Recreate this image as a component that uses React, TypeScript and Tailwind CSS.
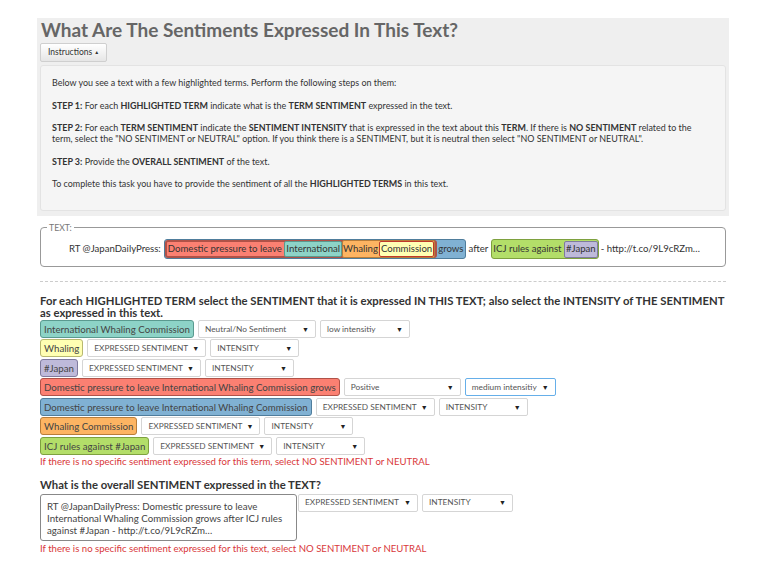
import React from "react";

const C = {
  teal: "bg-[#8dd3c7] border-[#5a9a8f]",
  yellow: "bg-[#ffffb3] border-[#b8b870]",
  purple: "bg-[#bebada] border-[#7f7b9e]",
  red: "bg-[#fb8072] border-[#b05248]",
  blue: "bg-[#80b1d3] border-[#4f7d9c]",
  orange: "bg-[#fdb462] border-[#b87d3a]",
  green: "bg-[#b3de69] border-[#7ea13f]",
};

function Sel({ w, text, focus }: { w: string; text: string; focus?: boolean }) {
  return (
    <div
      className={`${w} h-[18px] bg-white border ${focus ? "border-[#66afe9]" : "border-[#d5d5d5]"} rounded-[2px] flex items-center justify-between pl-[6px] pr-[6px] text-[8.3px] text-[#555]`}
    >
      <span className="whitespace-nowrap">{text}</span>
      <span className="text-[7px] text-[#222]">▼</span>
    </div>
  );
}

function Term({ color, children }: { color: string; children: React.ReactNode }) {
  return (
    <div className={`${color} h-[18px] border rounded-[3px] px-[3px] flex items-center text-[9.7px] text-[#444] whitespace-nowrap`}>
      {children}
    </div>
  );
}

function Row({ color, term, s1, s2, w1, w2, focus }: any) {
  return (
    <div className="flex items-center gap-[4px] h-[19.5px]">
      <Term color={color}>{term}</Term>
      <Sel w={w1} text={s1} />
      <Sel w={w2} text={s2} focus={focus} />
    </div>
  );
}

export default function App() {
  return (
    <div className="min-h-[576px] bg-white" style={{ fontFamily: "Lato, 'Open Sans', sans-serif" }}>
      <div className="ml-[37px] w-[692px] pt-[18px]">
        <div className="bg-[#efefef] px-[3px] pt-[1px] pb-[5px]">
          <h1 className="text-[19px] font-bold text-[#666] leading-[22px] ml-[1px]">
            What Are The Sentiments Expressed In This Text?
          </h1>
          <button className="mt-[2px] h-[19px] px-[7px] text-[8.5px] text-[#333] border border-[#cfcfcf] rounded-[2px] bg-gradient-to-b from-white to-[#e6e6e6] flex items-center gap-[2px]">
            Instructions <span className="text-[5px]">▲</span>
          </button>
          <div className="mt-[3px] h-[146px] bg-[#f5f5f5] border border-[#e3e3e3] rounded-[3px] px-[11px] pt-[11px] text-[8.95px] leading-[11px] text-[#333]">
            <p className="mb-[11.5px]">Below you see a text with a few highlighted terms. Perform the following steps on them:</p>
            <p className="mb-[11.5px]">
              <b>STEP 1:</b> For each <b>HIGHLIGHTED TERM</b> indicate what is the <b>TERM SENTIMENT</b> expressed in the text.
            </p>
            <p className="mb-[11.5px]">
              <b>STEP 2:</b> For each <b>TERM SENTIMENT</b> indicate the <b>SENTIMENT INTENSITY</b> that is expressed in the text about this <b>TERM</b>. If there is <b>NO SENTIMENT</b> related to the term, select the "NO SENTIMENT or NEUTRAL" option. If you think there is a SENTIMENT, but it is neutral then select "NO SENTIMENT or NEUTRAL".
            </p>
            <p className="mb-[11.5px]">
              <b>STEP 3:</b> Provide the <b>OVERALL SENTIMENT</b> of the text.
            </p>
            <p>
              To complete this task you have to provide the sentiment of all the <b>HIGHLIGHTED TERMS</b> in this text.
            </p>
          </div>
        </div>

        <fieldset className="mt-[5px] mx-[3px] border border-[#999] rounded-[4px] pl-[28px] pr-[6px] pb-[7px] pt-[5px]">
          <legend className="text-[8.7px] text-[#777] px-[2px] ml-[-22px]">TEXT:</legend>
          <div className="flex items-center text-[9.6px] text-[#333] whitespace-nowrap h-[20px]">
            <span className="mr-[3px]">RT @JapanDailyPress:</span>
            <span className={`${C.blue} border rounded-[3px] flex items-center h-[20px]`}>
              <span className={`${C.red} border-2 border-[#333]/70 rounded-[3px] flex items-center h-[18px] pl-[1px]`}>
                Domestic pressure to leave&nbsp;
                <span className={`${C.teal} border rounded-[2px] px-[1px]`}>International</span>
                <span className={`${C.orange} border rounded-[2px] flex items-center`}>
                  Whaling
                  <span className={`${C.yellow} border border-[#c0392b] rounded-[2px] px-[1px] ml-[1px]`}>Commission</span>
                </span>
              </span>
              <span className="px-[1px]">grows</span>
            </span>
            <span className="mx-[3px]">after</span>
            <span className={`${C.green} border rounded-[3px] flex items-center h-[20px] pl-[1px]`}>
              ICJ rules against&nbsp;
              <span className={`${C.purple} border rounded-[2px] px-[1px] h-[17px] flex items-center`}>#Japan</span>
            </span>
            <span className="ml-[2px]">- http://t.co/9L9cRZm…</span>
          </div>
        </fieldset>

        <div className="mt-[14px] mx-[3px] border-t border-dashed border-[#ccc]" />

        <div className="mx-[3px] mt-[13px]">
          <h2 className="text-[11.3px] font-bold text-[#333] leading-[12px]">
            For each HIGHLIGHTED TERM select the SENTIMENT that it is expressed IN THIS TEXT; also select the INTENSITY of THE SENTIMENT as expressed in this text.
          </h2>
          <div className="flex flex-col">
            <Row color={C.teal} term="International Whaling Commission" s1="Neutral/No Sentiment" s2="low intensitiy" w1="w-[118px]" w2="w-[90px]" />
            <Row color={C.yellow} term="Whaling" s1="EXPRESSED SENTIMENT" s2="INTENSITY" w1="w-[119px]" w2="w-[89px]" />
            <Row color={C.purple} term="#Japan" s1="EXPRESSED SENTIMENT" s2="INTENSITY" w1="w-[119px]" w2="w-[89px]" />
            <Row color={C.red} term="Domestic pressure to leave International Whaling Commission grows" s1="Positive" s2="medium intensitiy" w1="w-[117px]" w2="w-[91px]" focus />
            <Row color={C.blue} term="Domestic pressure to leave International Whaling Commission" s1="EXPRESSED SENTIMENT" s2="INTENSITY" w1="w-[119px]" w2="w-[89px]" />
            <Row color={C.orange} term="Whaling Commission" s1="EXPRESSED SENTIMENT" s2="INTENSITY" w1="w-[119px]" w2="w-[89px]" />
            <Row color={C.green} term="ICJ rules against #Japan" s1="EXPRESSED SENTIMENT" s2="INTENSITY" w1="w-[119px]" w2="w-[89px]" />
          </div>
          <p className="text-[9.6px] text-[#d9383a] leading-[12px]">
            If there is no specific sentiment expressed for this term, select NO SENTIMENT or NEUTRAL
          </p>

          <h2 className="mt-[10px] text-[11.3px] font-bold text-[#333] leading-[13px]">
            What is the overall SENTIMENT expressed in the TEXT?
          </h2>
          <div className="mt-[3px] flex items-start">
            <div className="w-[257px] h-[47px] border border-[#888] rounded-[3px] pl-[6px] pr-[3px] pt-[5px] text-[9.7px] leading-[12.3px] text-[#444]">
              RT @JapanDailyPress: Domestic pressure to leave International Whaling Commission grows after ICJ rules against #Japan - http://t.co/9L9cRZm…
            </div>
            <div className="ml-[1px] flex gap-[4px]">
              <Sel w="w-[120px]" text="EXPRESSED SENTIMENT" />
              <Sel w="w-[91px]" text="INTENSITY" />
            </div>
          </div>
          <p className="text-[9.6px] text-[#d9383a] leading-[12px] mt-[2px]">
            If there is no specific sentiment expressed for this text, select NO SENTIMENT or NEUTRAL
          </p>
        </div>
      </div>
    </div>
  );
}
